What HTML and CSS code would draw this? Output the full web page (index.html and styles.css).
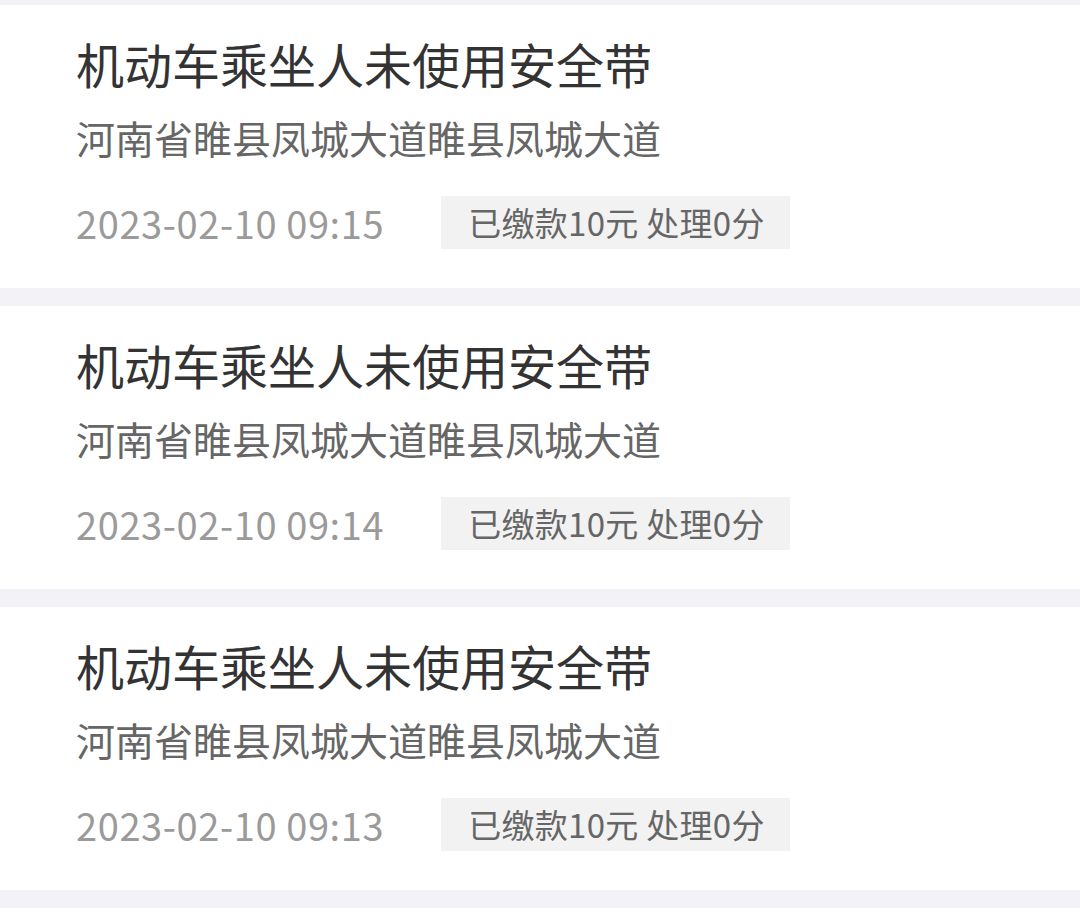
FILE: index.html
```html
<!DOCTYPE html>
<html lang="zh-CN">
<head>
<meta charset="utf-8">
<title>违法记录</title>
<link rel="stylesheet" href="styles.css">
</head>
<body>
<div class="list">
  <div class="card">
    <div class="title">机动车乘坐人未使用安全带</div>
    <div class="addr">河南省睢县凤城大道睢县凤城大道</div>
    <div class="meta">
      <span class="time">2023-02-10 09:15</span>
      <span class="tag">已缴款10元 处理0分</span>
    </div>
  </div>
  <div class="card">
    <div class="title">机动车乘坐人未使用安全带</div>
    <div class="addr">河南省睢县凤城大道睢县凤城大道</div>
    <div class="meta">
      <span class="time">2023-02-10 09:14</span>
      <span class="tag">已缴款10元 处理0分</span>
    </div>
  </div>
  <div class="card">
    <div class="title">机动车乘坐人未使用安全带</div>
    <div class="addr">河南省睢县凤城大道睢县凤城大道</div>
    <div class="meta">
      <span class="time">2023-02-10 09:13</span>
      <span class="tag">已缴款10元 处理0分</span>
    </div>
  </div>
  <div class="card card-tail"></div>
</div>
</body>
</html>
```
FILE: styles.css
```css
html, body {
  margin: 0;
  padding: 0;
  background: #f3f3f7;
  font-family: "Noto Sans CJK SC", "Noto Sans", sans-serif;
}
.list {
  display: flex;
  flex-direction: column;
  gap: 18px;
  padding-top: 5px;
}
.card {
  background: #ffffff;
  height: 283px;
  box-sizing: border-box;
  padding: 28px 0 0 76px;
}
.card-tail {
  height: 40px;
}
.title {
  font-size: 48px;
  line-height: 60px;
  color: #333333;
  white-space: nowrap;
}
.addr {
  margin-top: 20px;
  font-size: 39px;
  line-height: 48px;
  color: #666666;
  white-space: nowrap;
}
.meta {
  margin-top: 35px;
  display: flex;
  align-items: center;
  gap: 57px;
  height: 53px;
}
.time {
  font-size: 38px;
  letter-spacing: 0.6px;
  color: #9a9a9a;
  white-space: nowrap;
}
.tag {
  background: #f2f2f2;
  color: #666666;
  font-size: 33px;
  letter-spacing: 0.3px;
  height: 53px;
  line-height: 53px;
  padding: 0 25px 0 27px;
  white-space: nowrap;
}
```
